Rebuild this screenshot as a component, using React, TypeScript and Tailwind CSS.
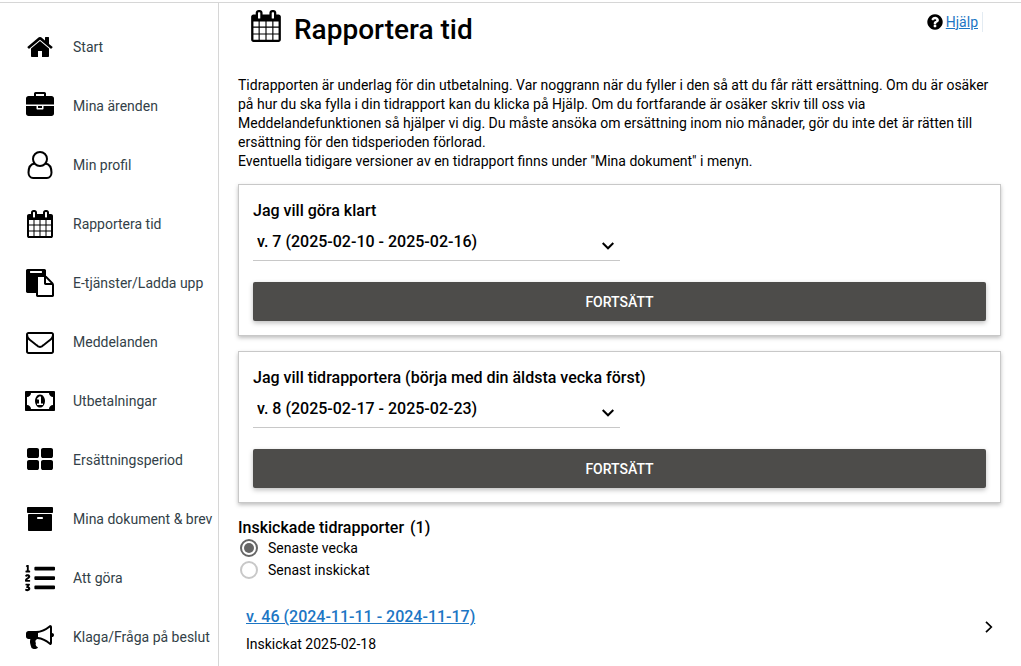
import { useState, type ReactNode } from 'react';
import { clsx } from 'clsx';
import { FaListOl } from 'react-icons/fa';

const paths = {
  home: 'M1472 992v480q0 26-19 45t-45 19h-384v-384h-256v384h-384q-26 0-45-19t-19-45v-480q0-1 .5-3t.5-3l575-474 575 474q1 2 1 6zm223-69l-62 74q-8 9-21 11h-3q-13 0-21-7l-692-577-692 577q-12 8-24 7-13-2-21-11l-62-74q-8-10-7-23.5t11-21.5l719-599q32-26 76-26t76 26l244 204v-195q0-14 9-23t23-9h192q14 0 23 9t9 23v408l219 182q10 8 11 21.5t-7 23.5z',
  briefcase: 'M640 256h512v-128h-512v128zm1152 640v480q0 66-47 113t-113 47h-1472q-66 0-113-47t-47-113v-480h672v160q0 26 19 45t45 19h320q26 0 45-19t19-45v-160h672zm-768 0v128h-256v-128h256zm768-480v384h-1792v-384q0-66 47-113t113-47h352v-160q0-40 28-68t68-28h576q40 0 68 28t28 68v160h352q66 0 113 47t47 113z',
  calendar: 'M192 1664h288v-288h-288v288zm352 0h320v-288h-320v288zm-352-352h288v-320h-288v320zm352 0h320v-320h-320v320zm-352-384h288v-288h-288v288zm736 736h320v-288h-320v288zm-384-736h320v-288h-320v288zm768 736h288v-288h-288v288zm-384-352h320v-320h-320v320zm-352-864v-288q0-13-9.5-22.5t-22.5-9.5h-64q-13 0-22.5 9.5t-9.5 22.5v288q0 13 9.5 22.5t22.5 9.5h64q13 0 22.5-9.5t9.5-22.5zm736 864h288v-320h-288v320zm-384-384h320v-288h-320v288zm384 0h288v-288h-288v288zm32-480v-288q0-13-9.5-22.5t-22.5-9.5h-64q-13 0-22.5 9.5t-9.5 22.5v288q0 13 9.5 22.5t22.5 9.5h64q13 0 22.5-9.5t9.5-22.5zm384-64v1280q0 52-38 90t-90 38h-1408q-52 0-90-38t-38-90v-1280q0-52 38-90t90-38h128v-96q0-66 47-113t113-47h64q66 0 113 47t47 113v96h384v-96q0-66 47-113t113-47h64q66 0 113 47t47 113v96h128q52 0 90 38t38 90z',
  paste: 'M768 1664h896v-640h-416q-40 0-68-28t-28-68v-416h-384v1152zm256-1440v-64q0-13-9.5-22.5t-22.5-9.5h-704q-13 0-22.5 9.5t-9.5 22.5v64q0 13 9.5 22.5t22.5 9.5h704q13 0 22.5-9.5t9.5-22.5zm256 672h299l-299-299v299zm512 128v672q0 40-28 68t-68 28h-960q-40 0-68-28t-28-68v-160h-544q-40 0-68-28t-28-68v-1344q0-40 28-68t68-28h1088q40 0 68 28t28 68v328q21 13 36 28l408 408q28 28 48 76t20 88z',
  envelope: 'M1664 1504v-768q-32 36-69 66-268 206-426 338-51 43-83 67t-86.5 48.5-102.5 24.5h-2q-48 0-102.5-24.5t-86.5-48.5-83-67q-158-132-426-338-37-30-69-66v768q0 13 9.5 22.5t22.5 9.5h1472q13 0 22.5-9.5t9.5-22.5zm0-1051v-24.5l-.5-13-3-12.5-5.5-9-9-7.5-14-2.5h-1472q-13 0-22.5 9.5t-9.5 22.5q0 168 147 284 193 152 401 317 6 5 35 29.5t46 37.5 44.5 31.5 50.5 27.5 43 9h2q20 0 43-9t50.5-27.5 44.5-31.5 46-37.5 35-29.5q208-165 401-317 54-43 100.5-115.5t46.5-131.5zm128-37v1088q0 66-47 113t-113 47h-1472q-66 0-113-47t-47-113v-1088q0-66 47-113t113-47h1472q66 0 113 47t47 113z',
  large: 'M832 1024v384q0 52-38 90t-90 38h-512q-52 0-90-38t-38-90v-384q0-52 38-90t90-38h512q52 0 90 38t38 90zm0-768v384q0 52-38 90t-90 38h-512q-52 0-90-38t-38-90v-384q0-52 38-90t90-38h512q52 0 90 38t38 90zm896 768v384q0 52-38 90t-90 38h-512q-52 0-90-38t-38-90v-384q0-52 38-90t90-38h512q52 0 90 38t38 90zm0-768v384q0 52-38 90t-90 38h-512q-52 0-90-38t-38-90v-384q0-52 38-90t90-38h512q52 0 90 38t38 90z',
  archive: 'M1088 832q0-26-19-45t-45-19h-256q-26 0-45 19t-19 45 19 45 45 19h256q26 0 45-19t19-45zm576-192v960q0 26-19 45t-45 19h-1408q-26 0-45-19t-19-45v-960q0-26 19-45t45-19h1408q26 0 45 19t19 45zm64-448v256q0 26-19 45t-45 19h-1536q-26 0-45-19t-19-45v-256q0-26 19-45t45-19h1536q26 0 45 19t19 45z',
  bullhorn: 'M1664 640q53 0 90.5 37.5t37.5 90.5-37.5 90.5-90.5 37.5v384q0 52-38 90t-90 38q-417-347-812-380-58 19-91 66t-31 100.5 40 92.5q-20 33-23 65.5t6 58 33.5 55 48 50 61.5 50.5q-29 58-111.5 83t-168.5 11.5-132-55.5q-7-23-29.5-87.5t-32-94.5-23-89-15-101 3.5-98.5 22-110.5h-122q-66 0-113-47t-47-113v-192q0-66 47-113t113-47h480q435 0 896-384 52 0 90 38t38 90v384zm-128 604v-954q-394 302-768 343v270q377 42 768 341z',
  question: 'M1024 1376v-192q0-14-9-23t-23-9h-192q-14 0-23 9t-9 23v192q0 14 9 23t23 9h192q14 0 23-9t9-23zm256-672q0-88-55.5-163t-138.5-116-170-41q-243 0-371 213-15 24 8 42l132 100q7 6 19 6 16 0 25-12 53-68 86-92 34-24 86-24 48 0 85.5 26t37.5 59q0 38-20 61t-68 45q-63 28-115.5 86.5t-52.5 125.5v36q0 14 9 23t23 9h192q14 0 23-9t9-23q0-19 21.5-49.5t54.5-49.5q32-18 49-28.5t46-35 44.5-48 28-60.5 12.5-81zm384 192q0 209-103 385.5t-279.5 279.5-385.5 103-385.5-103-279.5-279.5-103-385.5 103-385.5 279.5-279.5 385.5-103 385.5 103 279.5 279.5 103 385.5z',
};

function Icon({ name, className = 'size-7' }: { name: keyof typeof paths; className?: string }) {
  return (
    <svg viewBox="0 0 1792 1792" fill="currentColor" aria-hidden="true" className={className}>
      <path d={paths[name]} />
    </svg>
  );
}

function UserIcon() {
  return (
    <svg viewBox="0 0 28 28" fill="none" stroke="currentColor" strokeWidth="2" aria-hidden="true" className="size-7">
      <circle cx="14" cy="8" r="7" />
      <path d="M8.6 12.4C4.2 13 2.5 17 2.5 21.6c0 3.1 1.9 5.4 4.6 5.4h13.8c2.7 0 4.6-2.3 4.6-5.4 0-4.6-1.7-8.6-6.1-9.2" />
    </svg>
  );
}

function MoneyIcon() {
  return (
    <svg viewBox="0 0 1920 1792" fill="currentColor" aria-hidden="true" className="h-7 w-[30px] shrink-0">
      <path d="M768 1152h384v-96h-128v-448h-114l-148 137 77 80q42-37 55-57h2v288h-128v96zm512-256q0 70-21 142t-59.5 134-101.5 101-138 39-138-39-101.5-101-59.5-134-21-142 21-142 59.5-134 101.5-101 138-39 138 39 101.5 101 59.5 134 21 142zm512 256v-512q-106 0-181-75t-75-181h-1152q0 106-75 181t-181 75v512q106 0 181 75t75 181h1152q0-106 75-181t181-75zm128-832v1152q0 26-19 45t-45 19h-1792q-26 0-45-19t-19-45v-1152q0-26 19-45t45-19h1792q26 0 45 19t19 45z" />
    </svg>
  );
}

const menu: { label: string; icon: ReactNode }[] = [
  { label: 'Start', icon: <Icon name="home" /> },
  { label: 'Mina ärenden', icon: <Icon name="briefcase" /> },
  { label: 'Min profil', icon: <UserIcon /> },
  { label: 'Rapportera tid', icon: <Icon name="calendar" /> },
  { label: 'E-tjänster/Ladda upp', icon: <Icon name="paste" /> },
  { label: 'Meddelanden', icon: <Icon name="envelope" /> },
  { label: 'Utbetalningar', icon: <MoneyIcon /> },
  { label: 'Ersättningsperiod', icon: <Icon name="large" /> },
  { label: 'Mina dokument & brev', icon: <Icon name="archive" /> },
  { label: 'Att göra', icon: <FaListOl aria-hidden="true" className="size-[30px] shrink-0" /> },
  { label: 'Klaga/Fråga på beslut', icon: <Icon name="bullhorn" /> },
];

function Sidebar() {
  return (
    <nav className="w-[219px] shrink-0 border-r border-[#d6d6d6] pt-[30px]">
      <ul className="flex flex-col gap-[31px]">
        {menu.map((item) => (
          <li key={item.label}>
            <a href="#" className="flex h-7 items-center pl-[25px] whitespace-nowrap text-[#333f48]">
              <span className="flex w-[30px] shrink-0 justify-center text-black">{item.icon}</span>
              <span className="pl-[18px]">{item.label}</span>
            </a>
          </li>
        ))}
      </ul>
    </nav>
  );
}

function WeekCard({ id, title, week }: { id: string; title: string; week: string }) {
  return (
    <section className="border border-[#c8c8c8] bg-white px-3.5 pt-4 pb-3.5 shadow-[0_2px_4px_rgba(0,0,0,0.25)]">
      <label htmlFor={id} className="block text-base leading-5 font-medium">
        {title}
      </label>
      <div className="relative w-1/2">
        <select
          id={id}
          className="h-10 w-full appearance-none border-b border-[#c8c8c8] bg-transparent pt-[3px] pr-10 pl-1 text-base font-medium"
        >
          <option>{week}</option>
        </select>
        <svg
          viewBox="0 0 12 8"
          fill="none"
          stroke="currentColor"
          strokeWidth="2"
          aria-hidden="true"
          className="pointer-events-none absolute right-1.5 bottom-[11px] h-2 w-3"
        >
          <path d="M.7 1 6 6.3 11.3 1" />
        </svg>
      </div>
      <button
        type="button"
        className="mt-[21px] h-[39px] w-full rounded-xs bg-[#4d4c4a] pt-px font-medium text-white shadow-[0_2px_5px_rgba(0,0,0,0.26)]"
      >
        FORTSÄTT
      </button>
    </section>
  );
}

const sortings = ['Senaste vecka', 'Senast inskickat'];

export default function App() {
  const [sorting, setSorting] = useState(sortings[0]);

  return (
    <div className="min-h-screen bg-white pt-0.5 font-[Roboto,sans-serif] text-sm leading-[19px] text-black">
      <div className="flex min-h-[calc(100vh-2px)] border-t border-[#d6d6d6]">
        <Sidebar />
        <main className="min-w-0 flex-1 pr-5 pl-[19px]">
          <header className="flex items-start justify-between pt-[7px] pl-3">
            <div className="flex items-start">
              <Icon name="calendar" className="size-8" />
              <h1 className="pt-0.5 pl-3 text-[28px] leading-9 font-medium">Rapportera tid</h1>
            </div>
            <div className="mt-0.5 mr-[18px] flex h-5 items-center gap-0.5 border-r border-[#e3ebf2] pr-1">
              <Icon name="question" className="size-[18px]" />
              <a href="#" className="text-[#1c76c4] underline">Hjälp</a>
            </div>
          </header>

          <p className="mt-7">
            Tidrapporten är underlag för din utbetalning. Var noggrann när du fyller i den så att du får rätt ersättning. Om du är
            osäker på hur du ska fylla i din tidrapport kan du klicka på Hjälp. Om du fortfarande är osäker skriv till oss via
            Meddelandefunktionen så hjälper vi dig. Du måste ansöka om ersättning inom nio månader, gör du inte det är rätten till
            ersättning för den tidsperioden förlorad.
            <br />
            Eventuella tidigare versioner av en tidrapport finns under "Mina dokument" i menyn.
          </p>

          <div className="mt-[13px] flex flex-col gap-[15px]">
            <WeekCard id="klart" title="Jag vill göra klart" week="v. 7 (2025-02-10 - 2025-02-16)" />
            <WeekCard
              id="tidrapportera"
              title="Jag vill tidrapportera (börja med din äldsta vecka först)"
              week="v. 8 (2025-02-17 - 2025-02-23)"
            />
          </div>

          <fieldset className="mt-4">
            <legend className="text-base leading-[18px] font-medium">
              Inskickade tidrapporter <span className="pl-0.5">(1)</span>
            </legend>
            {sortings.map((name) => (
              <label key={name} className="flex h-[22px] items-center gap-2.5 pl-0.5">
                <input
                  type="radio"
                  name="sorting"
                  checked={sorting === name}
                  onChange={() => setSorting(name)}
                  className={clsx(
                    'size-[18px] appearance-none rounded-full border-2 bg-clip-content p-0.5',
                    sorting === name ? 'border-[#666666] bg-[#666666]' : 'border-[#c8c8c8]',
                  )}
                />
                {name}
              </label>
            ))}
          </fieldset>

          <div className="mt-[26px] flex items-start justify-between pr-2 pl-2">
            <div>
              <a href="#" className="text-base leading-5 font-medium text-[#1c76c4] underline">
                v. 46 (2024-11-11 - 2024-11-17)
              </a>
              <p className="mt-2">Inskickat 2025-02-18</p>
            </div>
            <svg viewBox="0 0 8 12" fill="none" stroke="currentColor" strokeWidth="1.7" aria-hidden="true" className="mt-3.5 h-3 w-2">
              <path d="M1 .8 6.3 6 1 11.2" />
            </svg>
          </div>
        </main>
      </div>
    </div>
  );
}
